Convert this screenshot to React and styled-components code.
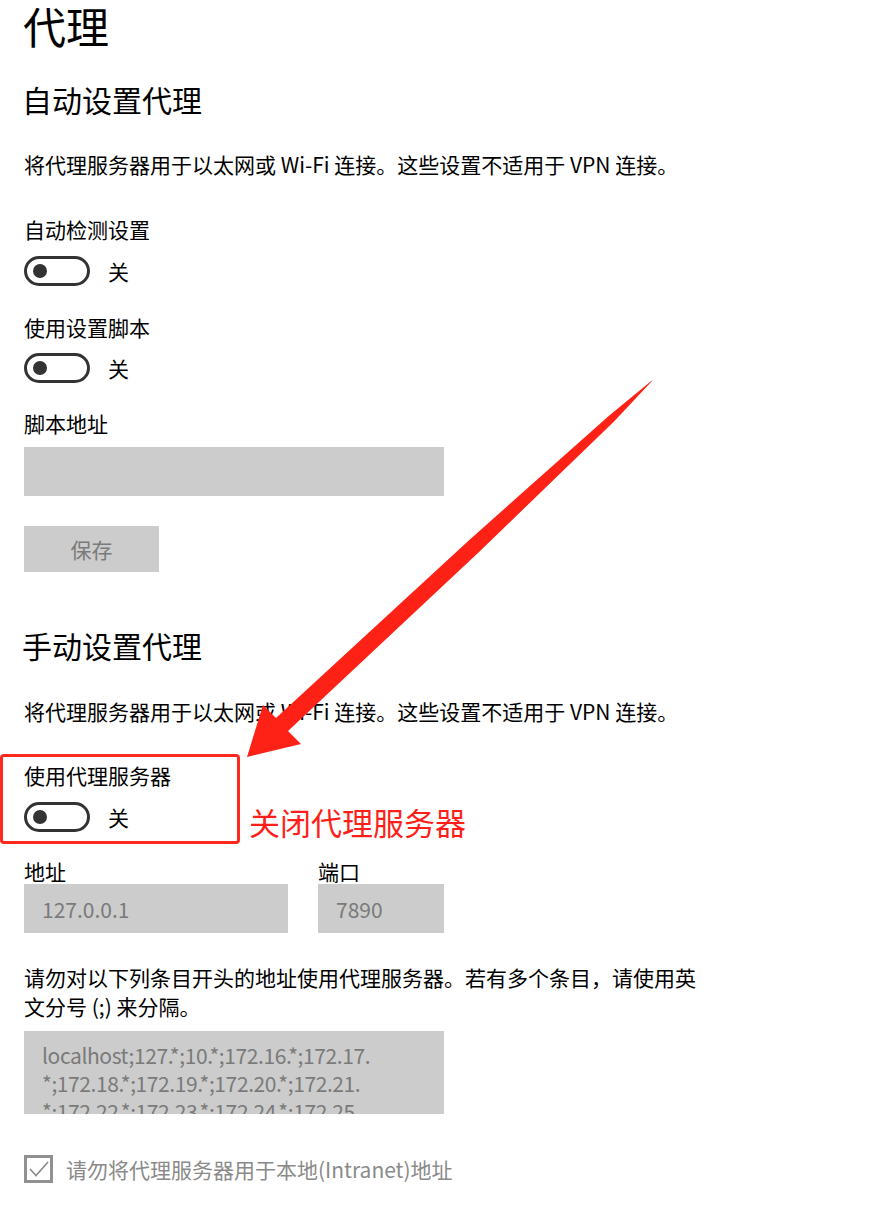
import React from 'react';
import styled, { createGlobalStyle } from 'styled-components';

const GlobalStyle = createGlobalStyle`
  html, body {
    margin: 0;
    padding: 0;
    background: #fff;
  }
  body {
    font-family: "Noto Sans CJK SC", "Noto Sans", sans-serif;
    color: #000;
  }
`;

const Page = styled.div`
  position: relative;
  width: 880px;
  min-height: 1214px;
  box-sizing: border-box;
  padding-left: 24px;
  display: flex;
  flex-direction: column;
  align-items: flex-start;
`;

const Title = styled.h1`
  margin: 0;
  font-size: 43px;
  line-height: 50px;
  font-weight: 400;
  margin-left: -1px;
`;

const Heading = styled.h2`
  margin: ${p => p.$top}px 0 0 -2px;
  font-size: 30px;
  line-height: 40px;
  font-weight: 400;
`;

const Text = styled.p`
  margin: ${p => p.$top}px 0 0;
  font-size: 21px;
  line-height: ${p => p.$lh || 30}px;
  white-space: nowrap;
`;

const Label = styled.div`
  margin-top: ${p => p.$top || 0}px;
  font-size: 21px;
  line-height: ${p => p.$lh || 30}px;
`;

const ToggleRow = styled.div`
  display: flex;
  align-items: center;
  gap: 18px;
  margin-top: ${p => p.$top}px;
  font-size: 21px;
`;

const Track = styled.div`
  width: 66px;
  height: 30px;
  box-sizing: border-box;
  border: 3px solid #333;
  border-radius: 15px;
  display: flex;
  align-items: center;
  padding-left: 6px;
`;

const Knob = styled.div`
  width: 14px;
  height: 14px;
  border-radius: 50%;
  background: #333;
`;

const Field = styled.div`
  margin-top: ${p => p.$top || 0}px;
  width: ${p => p.$w}px;
  height: ${p => p.$h || 49}px;
  background: #ccc;
  box-sizing: border-box;
  padding: ${p => p.$pad || '0 18px'};
  display: flex;
  flex-direction: column;
  justify-content: ${p => (p.$multi ? 'flex-start' : 'center')};
  overflow: hidden;
  color: #7a7a7a;
  font-size: 21px;
  line-height: 28px;
`;

const FieldLine = styled.div`
  white-space: nowrap;
  letter-spacing: -0.4px;
`;

const SaveButton = styled.div`
  margin-top: 30px;
  width: 135px;
  height: 46px;
  background: #ccc;
  color: #7a7a7a;
  font-size: 21px;
  display: flex;
  align-items: center;
  justify-content: center;
`;

const HighlightRow = styled.div`
  margin-top: 28px;
  margin-left: -24px;
  display: flex;
  align-items: flex-end;
`;

const RedBox = styled.div`
  width: 240px;
  box-sizing: border-box;
  border: 3px solid #ff2a1f;
  border-radius: 4px;
  padding: 3px 0 9px 21px;
`;

const Note = styled.div`
  margin: 0 0 2px 9px;
  color: #ff1f1a;
  font-size: 31px;
  line-height: 40px;
`;

const Pair = styled.div`
  margin-top: 14px;
  display: flex;
  gap: 30px;
`;

const Column = styled.div`
  display: flex;
  flex-direction: column;
`;

const CheckRow = styled.div`
  margin-top: 41px;
  display: flex;
  align-items: center;
  gap: 13px;
  color: #8a8a8a;
  font-size: 21px;
  line-height: 28px;
`;

const CheckBox = styled.div`
  width: 29px;
  height: 28px;
  box-sizing: border-box;
  border: 3px solid #919191;
  display: flex;
  align-items: center;
  justify-content: center;
`;

const Overlay = styled.svg`
  position: absolute;
  left: 0;
  top: 0;
  pointer-events: none;
`;

const Toggle = ({ top }) => (
  <ToggleRow $top={top}>
    <Track>
      <Knob />
    </Track>
    <span>关</span>
  </ToggleRow>
);

export default function App() {
  return (
    <>
      <GlobalStyle />
      <Page>
        <Title>代理</Title>
        <Heading $top={29}>自动设置代理</Heading>
        <Text $top={30}>将代理服务器用于以太网或 Wi-Fi 连接。这些设置不适用于 VPN 连接。</Text>

        <Label $top={35}>自动检测设置</Label>
        <Toggle top={12} />

        <Label $top={26}>使用设置脚本</Label>
        <Toggle top={11} />

        <Label $top={25}>脚本地址</Label>
        <Field $top={9} $w={420} />
        <SaveButton>保存</SaveButton>

        <Heading $top={53}>手动设置代理</Heading>
        <Text $top={31}>将代理服务器用于以太网或 Wi-Fi 连接。这些设置不适用于 VPN 连接。</Text>

        <HighlightRow>
          <RedBox>
            <Label>使用代理服务器</Label>
            <Toggle top={12} />
          </RedBox>
          <Note>关闭代理服务器</Note>
        </HighlightRow>

        <Pair>
          <Column>
            <Label $lh={26}>地址</Label>
            <Field $w={264}>127.0.0.1</Field>
          </Column>
          <Column>
            <Label $lh={26}>端口</Label>
            <Field $w={126}>7890</Field>
          </Column>
        </Pair>

        <Text $top={30} $lh={29}>
          请勿对以下列条目开头的地址使用代理服务器。若有多个条目，请使用英
          <br />
          文分号 (;) 来分隔。
        </Text>

        <Field $top={10} $w={420} $h={83} $pad="10px 18px 0" $multi>
          <FieldLine>localhost;127.*;10.*;172.16.*;172.17.</FieldLine>
          <FieldLine>*;172.18.*;172.19.*;172.20.*;172.21.</FieldLine>
          <FieldLine>*;172.22.*;172.23.*;172.24.*;172.25.</FieldLine>
        </Field>

        <CheckRow>
          <CheckBox>
            <svg width="22" height="18" viewBox="0 0 22 18">
              <path d="M2 9 L8 15.5 L20 2" fill="none" stroke="#8a8a8a" strokeWidth="1.6" />
            </svg>
          </CheckBox>
          <span>请勿将代理服务器用于本地(Intranet)地址</span>
        </CheckRow>

        {/* annotation arrow drawn over the page */}
        <Overlay width="880" height="1214" viewBox="0 0 880 1214">
          <polygon
            points="653,380 614,421.5 479,552 288,731 301,744 247,757 263,705 276,718 468.5,540.7 609,415.7 650,382"
            fill="#fe2116"
          />
        </Overlay>
      </Page>
    </>
  );
}
